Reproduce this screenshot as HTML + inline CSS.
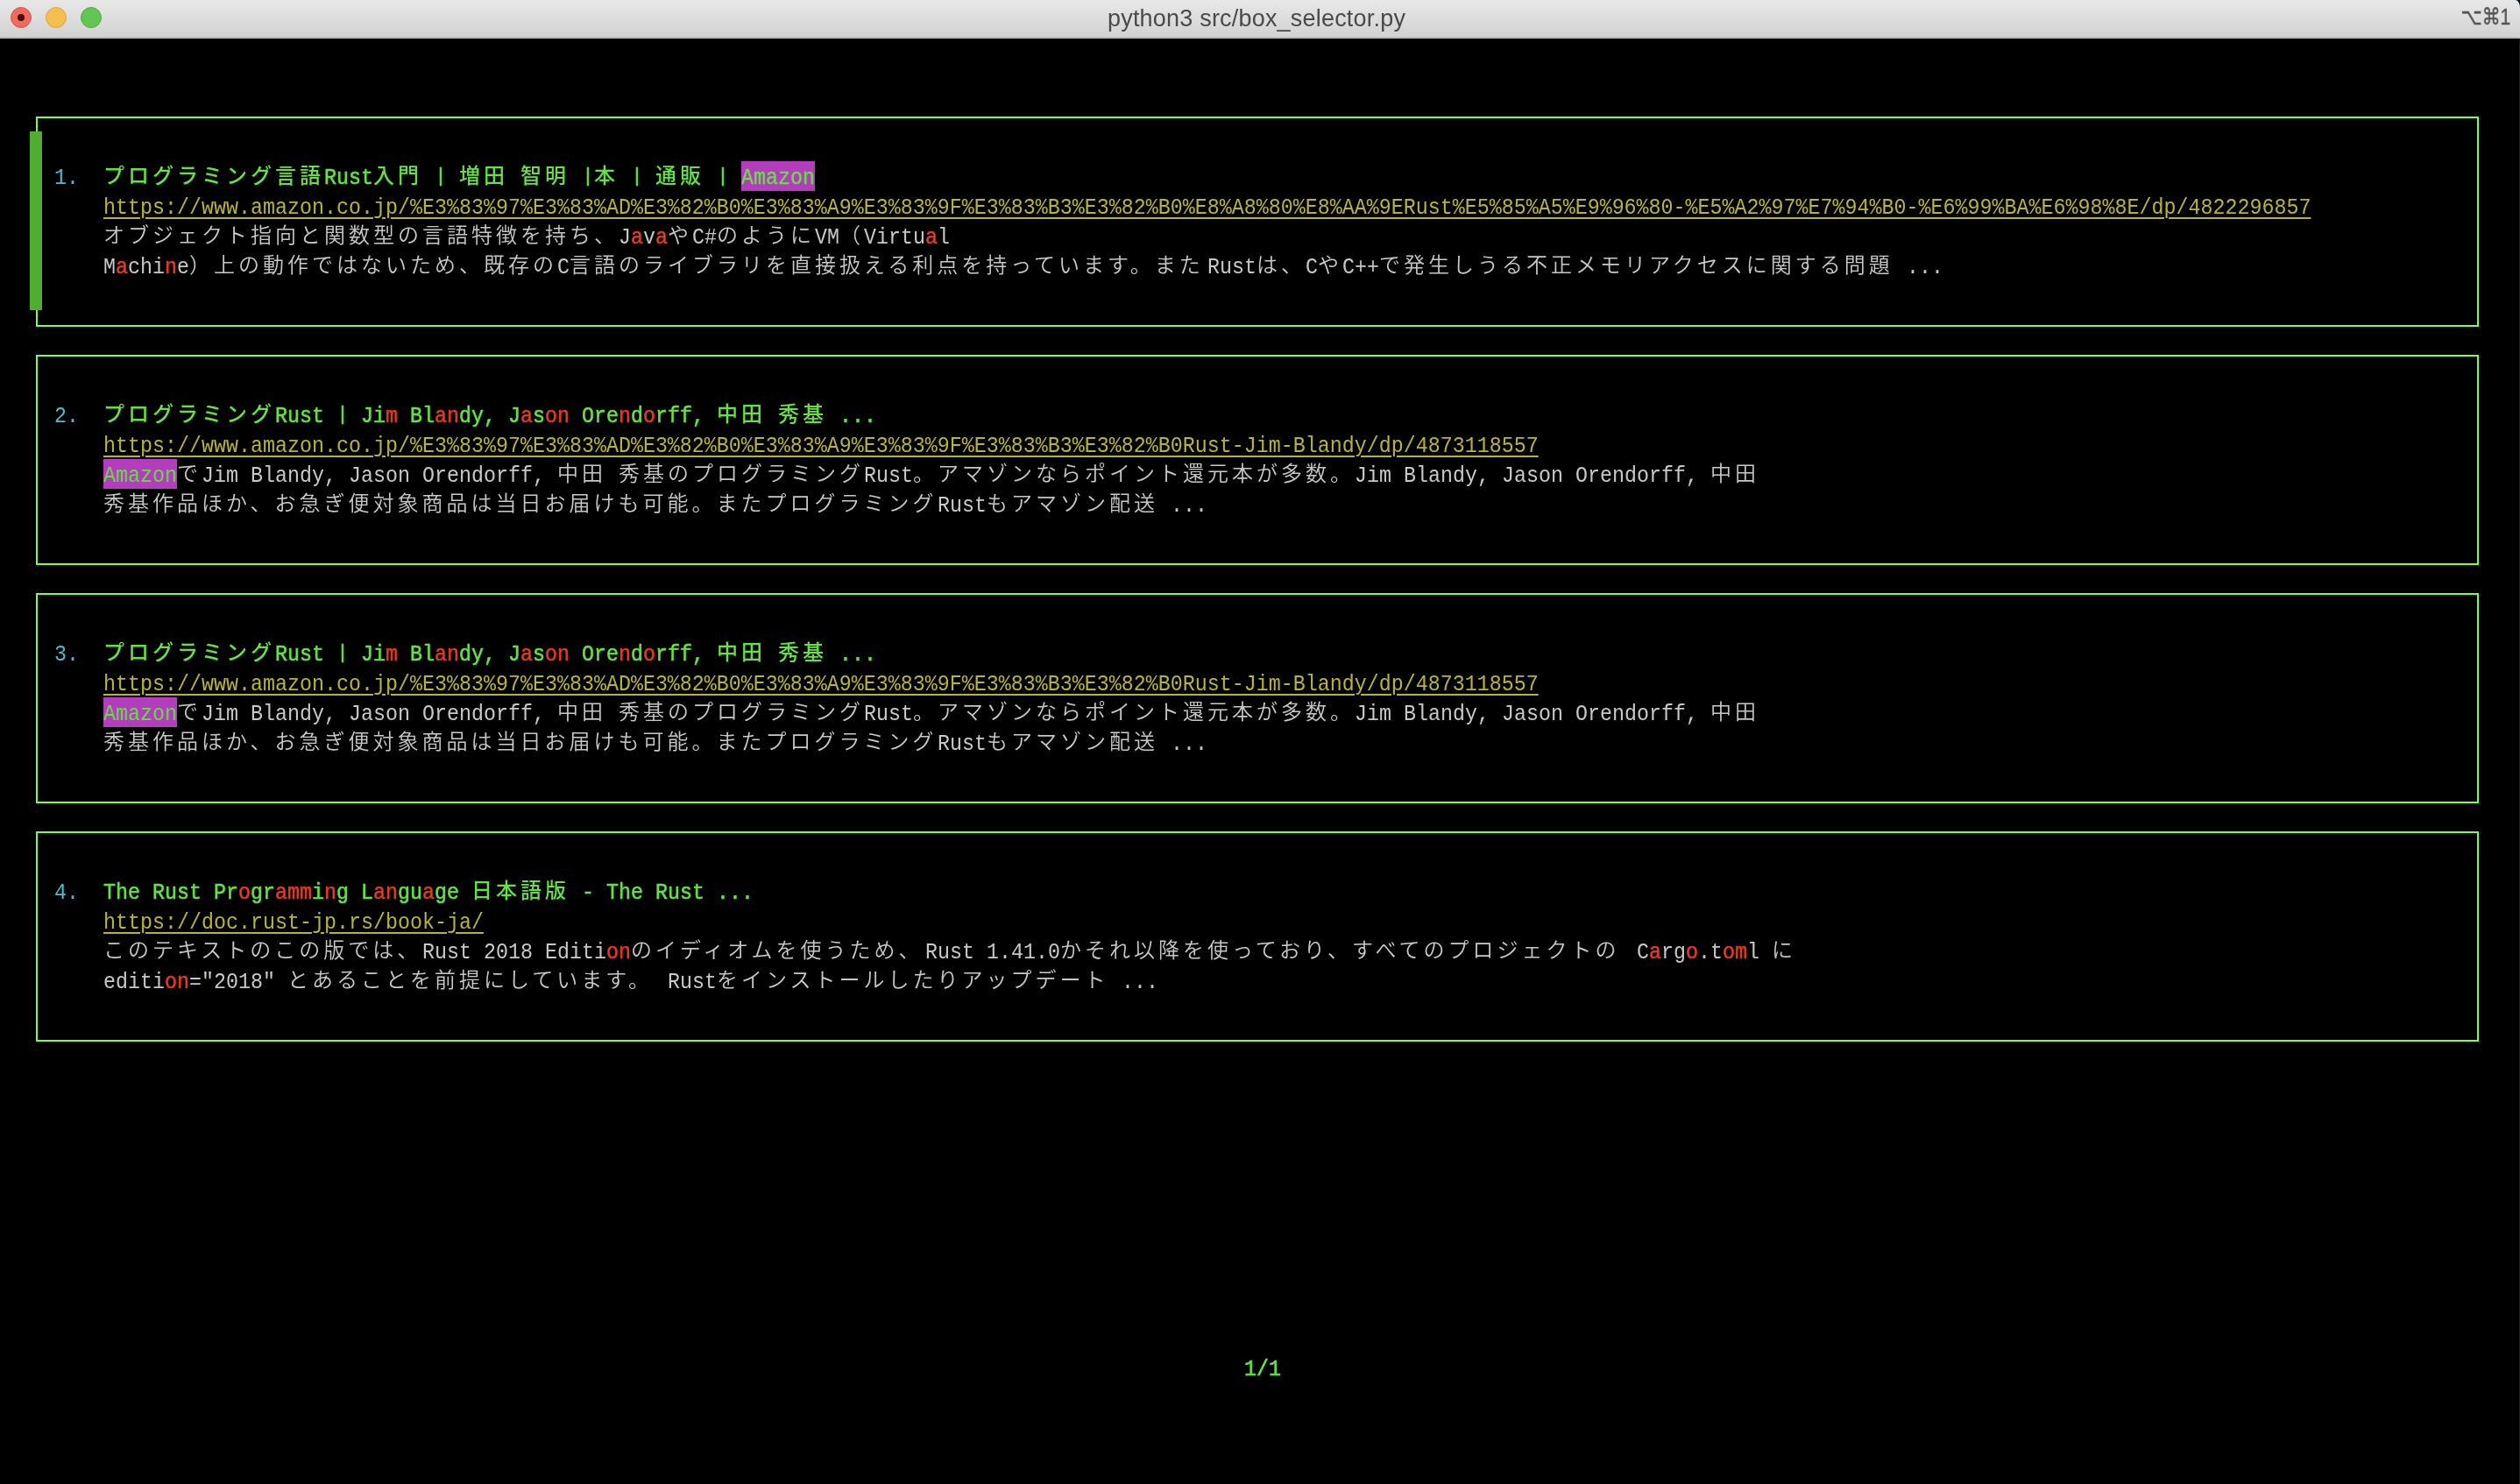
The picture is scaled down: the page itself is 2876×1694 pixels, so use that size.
<!DOCTYPE html>
<html lang="ja"><head><meta charset="utf-8"><title>python3 src/box_selector.py</title>
<style>
html,body{margin:0;padding:0;background:#000;}
body{width:2876px;height:1694px;position:relative;overflow:hidden;font-family:"Liberation Mono","Noto Sans CJK JP",monospace;}
#tb{position:absolute;left:0;top:0;width:2876px;height:44px;box-sizing:border-box;background:linear-gradient(#e8e8e8,#d2d2d2);border-bottom:2px solid #bcbcbc;border-top-right-radius:5px 9px;}
#cr{position:absolute;right:0;top:0;width:8px;height:10px;background:#030a24;}
#edge{position:absolute;right:0;top:44px;width:1px;height:1650px;background:#1c1c1c;}
#tb .dot{position:absolute;top:8px;width:24px;height:24px;border-radius:50%;box-sizing:border-box;}
#tb .d1{left:12px;background:#ed6b5f;border:1px solid #d8564b;}
#tb .d1 i{position:absolute;left:7px;top:7px;width:8px;height:8px;border-radius:50%;background:#4c0803;}
#tb .d2{left:52px;background:#f5bf4f;border:1px solid #d9a33d;}
#tb .d3{left:92px;background:#62c554;border:1px solid #52a842;}
#tb .ttl{will-change:transform;position:absolute;left:1264px;top:0;height:42px;line-height:42px;font-family:"Liberation Sans",sans-serif;font-size:27px;letter-spacing:.2px;color:#4a4a4a;white-space:pre;}
#tb .sc{will-change:transform;position:absolute;right:11px;top:-2px;height:42px;line-height:42px;font-family:"Liberation Sans","DejaVu Sans",sans-serif;font-size:25.6px;color:#555;white-space:pre;-webkit-text-stroke:.5px #555;transform:scaleX(.82);transform-origin:100% 0;}
#term{position:absolute;left:0;top:0;width:2876px;height:1694px;will-change:transform;}
.box{position:absolute;left:41px;width:2788px;height:240px;box-sizing:border-box;border:2px solid #7cfb50;}
.bar{position:absolute;left:34px;top:150px;width:14px;height:204px;background:#50ad31;}
.r{position:absolute;left:6px;height:34px;width:0;}
.r span{position:absolute;top:0;height:34px;line-height:38px;white-space:pre;display:block;}
.l{font-size:26.66px;transform:scaleX(.875);transform-origin:0 0;}
.j{font-size:24px;letter-spacing:4px;}
.t{color:#64e243;font-weight:bold;}
.j.t{font-weight:500;}
.j.d{font-weight:350;}
.n{color:#52bacd;}
.u{color:#b9b439;text-decoration:underline;text-decoration-thickness:2.3px;text-underline-offset:4px;}
.d{color:#c8c8c8;}
.red{color:#e63a1f;font-weight:bold;}
.hl{color:#64e243;background:#b43dbd;}
.hb{-webkit-text-stroke:.4px #64e243;}
.l.t,.l.red{font-weight:normal;-webkit-text-stroke:.6px currentColor;}
.l.p{transform:scale(.875,.833);transform-origin:0 7px;}
</style></head>
<body>
<div id="cr"></div><div id="tb"><span class="dot d1"><i></i></span><span class="dot d2"></span><span class="dot d3"></span><span class="ttl">python3 src/box_selector.py</span><span class="sc">⌥⌘1</span></div><div id="edge"></div>

<div id="term">
<div class="box" style="top:133px"></div>
<div class="bar"></div>
<div class="r" style="top:184px"><span class="l n" style="left:56px">1.  </span><span class="j t" style="left:112px">プログラミング言語</span><span class="l t" style="left:364px">Rust</span><span class="j t" style="left:420px">入門 </span><span class="l t p" style="left:490px">| </span><span class="j t" style="left:518px">増田 </span><span class="j t" style="left:588px">智明 </span><span class="l t p" style="left:658px">|</span><span class="j t" style="left:672px">本 </span><span class="l t p" style="left:714px">| </span><span class="j t" style="left:742px">通販 </span><span class="l t p" style="left:812px">| </span><span class="l hl hb" style="left:840px">Amazon</span></div>
<div class="r" style="top:218px"><span class="l u" style="left:112px">https:</span><span class="l u u2" style="left:196px">//www.amazon.co.jp/%E3%83%97%E3%83%AD%E3%82%B0%E3%83%A9%E3%83%9F%E3%83%B3%E3%82%B0%E8%A8%80%E8%AA%9ERust%E5%85%A5%E9%96%80-%E5%A2%97%E7%94%B0-%E6%99%BA%E6%98%8E/dp/4822296857</span></div>
<div class="r" style="top:252px"><span class="j d" style="left:112px">オブジェクト指向と関数型の言語特徴を持ち、</span><span class="l d" style="left:700px">J</span><span class="l red" style="left:714px">a</span><span class="l d" style="left:728px">v</span><span class="l red" style="left:742px">a</span><span class="j d" style="left:756px">や</span><span class="l d" style="left:784px">C#</span><span class="j d" style="left:812px">のように</span><span class="l d" style="left:924px">VM</span><span class="j d" style="left:952px">（</span><span class="l d" style="left:980px">Virtu</span><span class="l red" style="left:1050px">a</span><span class="l d" style="left:1064px">l</span></div>
<div class="r" style="top:286px"><span class="l d" style="left:112px">M</span><span class="l red" style="left:126px">a</span><span class="l d" style="left:140px">chi</span><span class="l red" style="left:182px">n</span><span class="l d" style="left:196px">e</span><span class="j d" style="left:210px">）上の動作ではないため、既存の</span><span class="l d" style="left:630px">C</span><span class="j d" style="left:644px">言語のライブラリを直接扱える利点を持っています。また</span><span class="l d" style="left:1372px">Rust</span><span class="j d" style="left:1428px">は、</span><span class="l d" style="left:1484px">C</span><span class="j d" style="left:1498px">や</span><span class="l d" style="left:1526px">C++</span><span class="j d" style="left:1568px">で発生しうる不正メモリアクセスに関する問題 </span><span class="l d" style="left:2170px">...</span></div>
<div class="box" style="top:405px"></div>
<div class="r" style="top:456px"><span class="l n" style="left:56px">2.  </span><span class="j t" style="left:112px">プログラミング</span><span class="l t" style="left:308px">Rust </span><span class="l t p" style="left:378px">| </span><span class="l t" style="left:406px">Ji</span><span class="l red" style="left:434px">m </span><span class="l t" style="left:462px">Bl</span><span class="l red" style="left:490px">an</span><span class="l t" style="left:518px">dy, J</span><span class="l red" style="left:588px">a</span><span class="l t" style="left:602px">s</span><span class="l red" style="left:616px">on </span><span class="l t" style="left:658px">Ore</span><span class="l red" style="left:700px">n</span><span class="l t" style="left:714px">d</span><span class="l red" style="left:728px">o</span><span class="l t" style="left:742px">rff, </span><span class="j t" style="left:812px">中田 </span><span class="j t" style="left:882px">秀基 </span><span class="l t" style="left:952px">...</span></div>
<div class="r" style="top:490px"><span class="l u" style="left:112px">https:</span><span class="l u u2" style="left:196px">//www.amazon.co.jp/%E3%83%97%E3%83%AD%E3%82%B0%E3%83%A9%E3%83%9F%E3%83%B3%E3%82%B0Rust-Jim-Blandy/dp/4873118557</span></div>
<div class="r" style="top:524px"><span class="l hl" style="left:112px">Amazon</span><span class="j d" style="left:196px">で</span><span class="l d" style="left:224px">Jim Blandy, Jason Orendorff, </span><span class="j d" style="left:630px">中田 </span><span class="j d" style="left:700px">秀基のプログラミング</span><span class="l d" style="left:980px">Rust</span><span class="j d" style="left:1036px">。アマゾンならポイント還元本が多数。</span><span class="l d" style="left:1540px">Jim Blandy, Jason Orendorff, </span><span class="j d" style="left:1946px">中田</span></div>
<div class="r" style="top:558px"><span class="j d" style="left:112px">秀基作品ほか、お急ぎ便対象商品は当日お届けも可能。またプログラミング</span><span class="l d" style="left:1064px">Rust</span><span class="j d" style="left:1120px">もアマゾン配送 </span><span class="l d" style="left:1330px">...</span></div>
<div class="box" style="top:677px"></div>
<div class="r" style="top:728px"><span class="l n" style="left:56px">3.  </span><span class="j t" style="left:112px">プログラミング</span><span class="l t" style="left:308px">Rust </span><span class="l t p" style="left:378px">| </span><span class="l t" style="left:406px">Ji</span><span class="l red" style="left:434px">m </span><span class="l t" style="left:462px">Bl</span><span class="l red" style="left:490px">an</span><span class="l t" style="left:518px">dy, J</span><span class="l red" style="left:588px">a</span><span class="l t" style="left:602px">s</span><span class="l red" style="left:616px">on </span><span class="l t" style="left:658px">Ore</span><span class="l red" style="left:700px">n</span><span class="l t" style="left:714px">d</span><span class="l red" style="left:728px">o</span><span class="l t" style="left:742px">rff, </span><span class="j t" style="left:812px">中田 </span><span class="j t" style="left:882px">秀基 </span><span class="l t" style="left:952px">...</span></div>
<div class="r" style="top:762px"><span class="l u" style="left:112px">https:</span><span class="l u u2" style="left:196px">//www.amazon.co.jp/%E3%83%97%E3%83%AD%E3%82%B0%E3%83%A9%E3%83%9F%E3%83%B3%E3%82%B0Rust-Jim-Blandy/dp/4873118557</span></div>
<div class="r" style="top:796px"><span class="l hl" style="left:112px">Amazon</span><span class="j d" style="left:196px">で</span><span class="l d" style="left:224px">Jim Blandy, Jason Orendorff, </span><span class="j d" style="left:630px">中田 </span><span class="j d" style="left:700px">秀基のプログラミング</span><span class="l d" style="left:980px">Rust</span><span class="j d" style="left:1036px">。アマゾンならポイント還元本が多数。</span><span class="l d" style="left:1540px">Jim Blandy, Jason Orendorff, </span><span class="j d" style="left:1946px">中田</span></div>
<div class="r" style="top:830px"><span class="j d" style="left:112px">秀基作品ほか、お急ぎ便対象商品は当日お届けも可能。またプログラミング</span><span class="l d" style="left:1064px">Rust</span><span class="j d" style="left:1120px">もアマゾン配送 </span><span class="l d" style="left:1330px">...</span></div>
<div class="box" style="top:949px"></div>
<div class="r" style="top:1000px"><span class="l n" style="left:56px">4.  </span><span class="l t" style="left:112px">The Rust Pr</span><span class="l red" style="left:266px">o</span><span class="l t" style="left:280px">gr</span><span class="l red" style="left:308px">amm</span><span class="l t" style="left:350px">i</span><span class="l red" style="left:364px">n</span><span class="l t" style="left:378px">g L</span><span class="l red" style="left:420px">an</span><span class="l t" style="left:448px">gu</span><span class="l red" style="left:476px">a</span><span class="l t" style="left:490px">ge </span><span class="j t" style="left:532px">日本語版 </span><span class="l t" style="left:658px">- The Rust ...</span></div>
<div class="r" style="top:1034px"><span class="l u" style="left:112px">https:</span><span class="l u u2" style="left:196px">//doc.rust-jp.rs/book-ja/</span></div>
<div class="r" style="top:1068px"><span class="j d" style="left:112px">このテキストのこの版では、</span><span class="l d" style="left:476px">Rust 2018 Editi</span><span class="l red" style="left:686px">on</span><span class="j d" style="left:714px">のイディオムを使うため、</span><span class="l d" style="left:1050px">Rust 1.41.0</span><span class="j d" style="left:1204px">かそれ以降を使っており、すべてのプロジェクトの </span><span class="l d" style="left:1862px">C</span><span class="l red" style="left:1876px">a</span><span class="l d" style="left:1890px">rg</span><span class="l red" style="left:1918px">o</span><span class="l d" style="left:1932px">.t</span><span class="l red" style="left:1960px">om</span><span class="l d" style="left:1988px">l </span><span class="j d" style="left:2016px">に</span></div>
<div class="r" style="top:1102px"><span class="l d" style="left:112px">editi</span><span class="l red" style="left:182px">on</span><span class="l d" style="left:210px">="2018" </span><span class="j d" style="left:322px">とあることを前提にしています。 </span><span class="l d" style="left:756px">Rust</span><span class="j d" style="left:812px">をインストールしたりアップデート </span><span class="l d" style="left:1274px">...</span></div>
<div class="r" style="top:1544px"><span class="l t" style="left:1414px">1/1</span></div>
</div>
</body></html>
